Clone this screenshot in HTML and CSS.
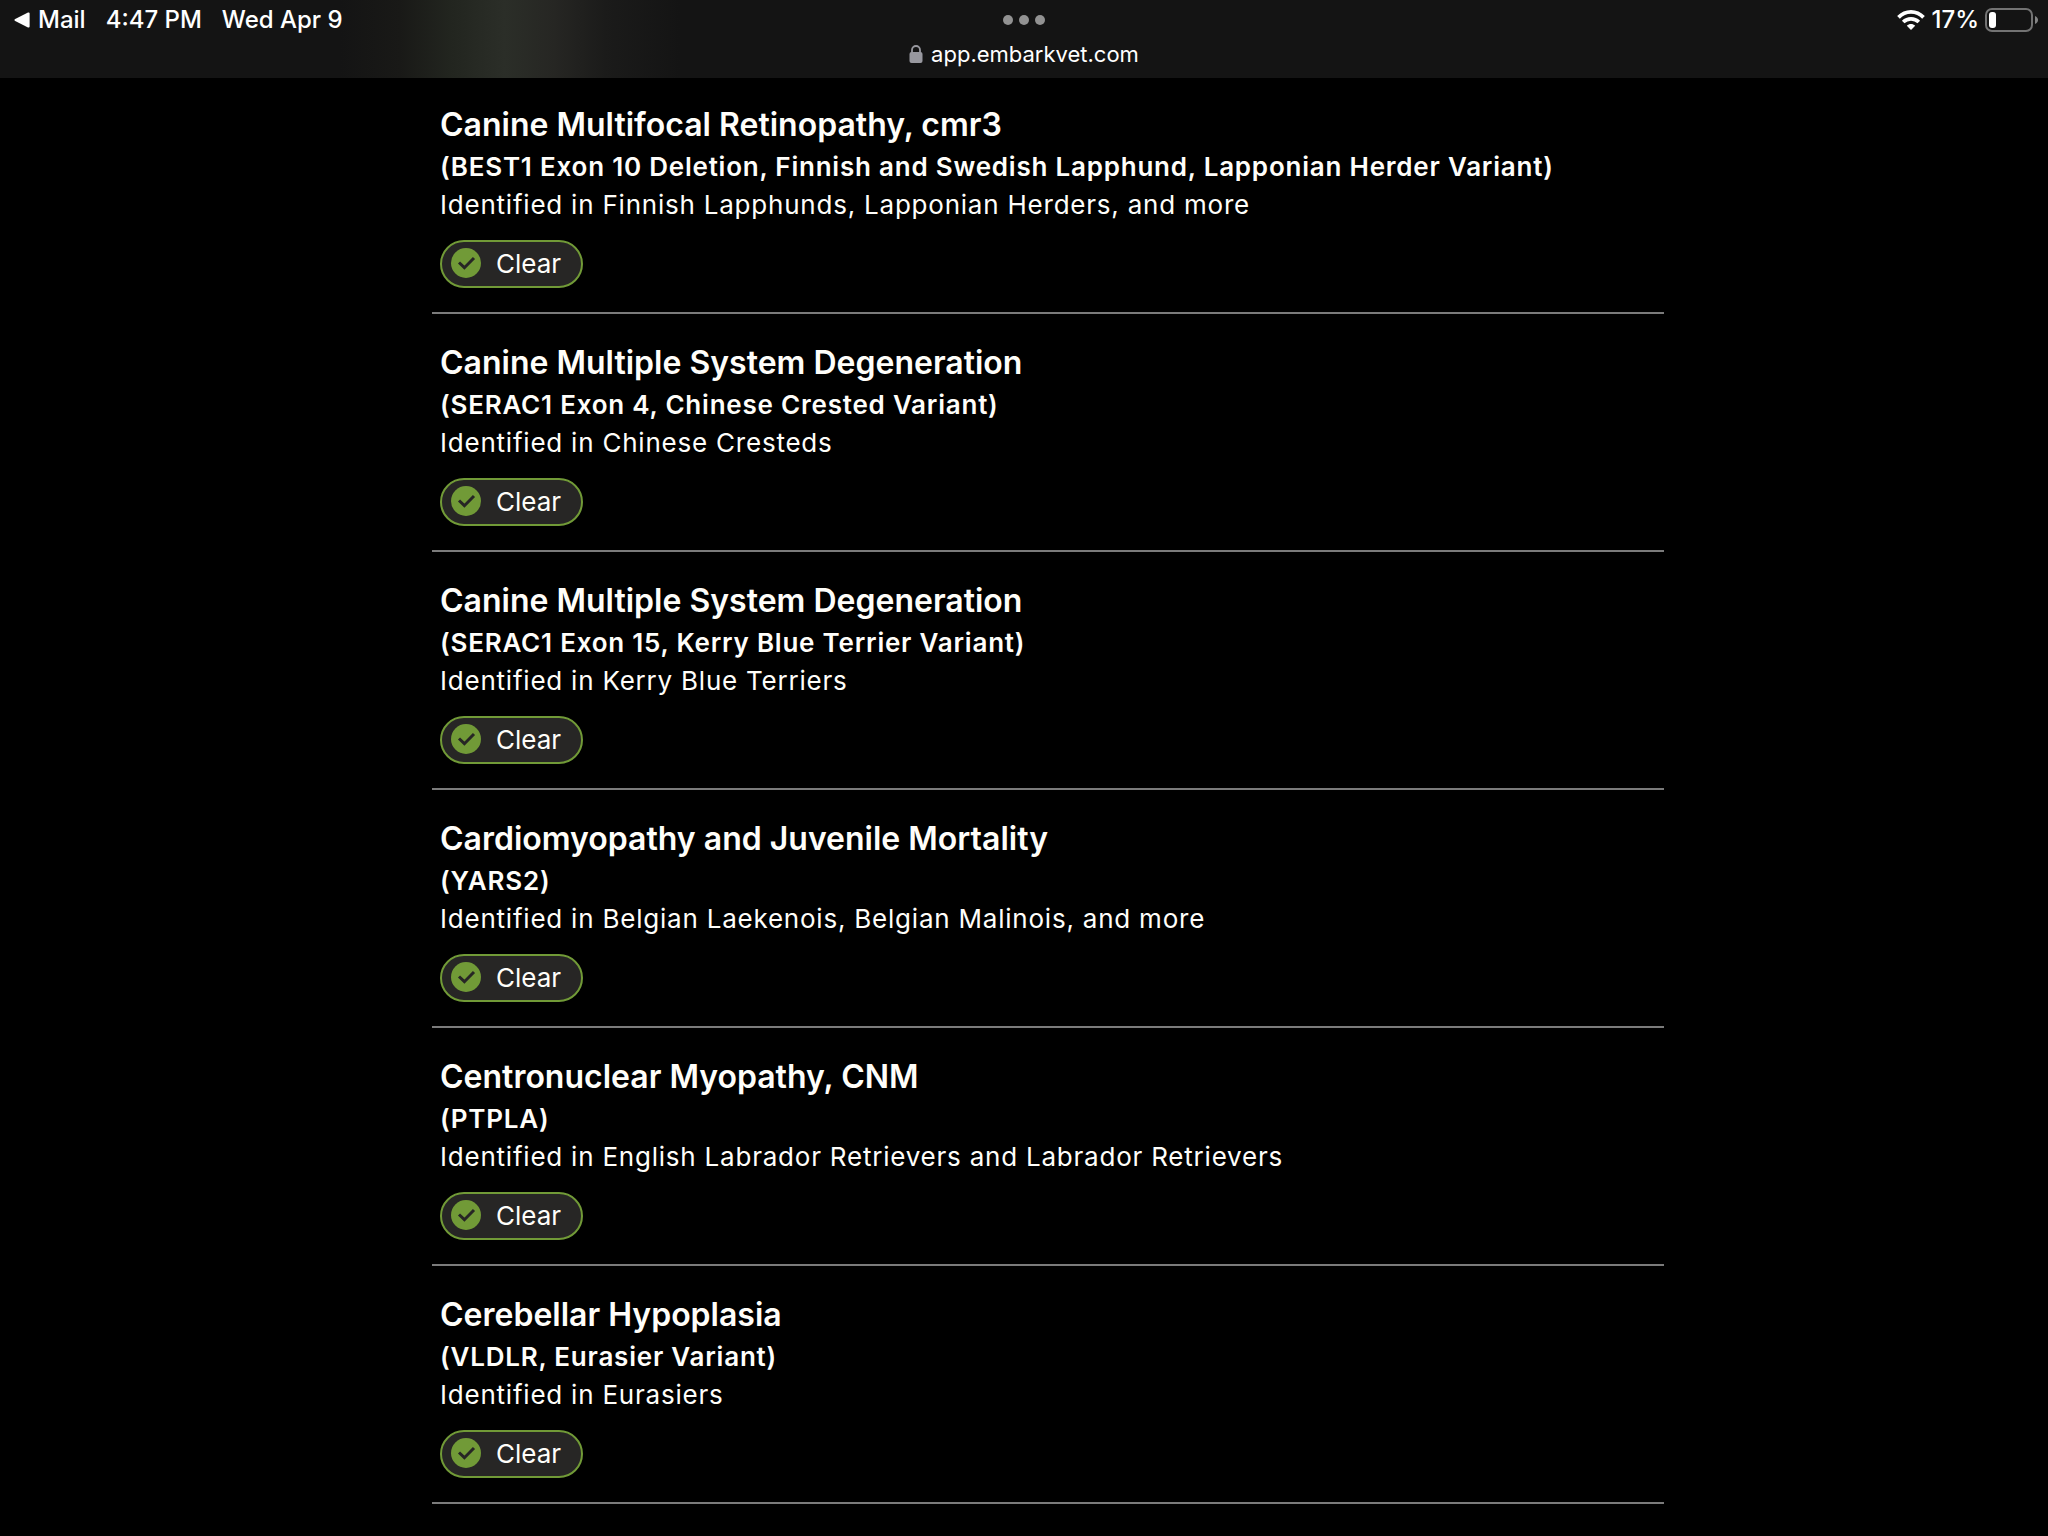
FILE: index.html
```html
<!DOCTYPE html>
<html lang="en">
<head>
<meta charset="utf-8">
<meta name="viewport" content="width=device-width, initial-scale=1">
<title>Health results</title>
<link rel="stylesheet" href="styles.css">
</head>
<body>
<svg class="sprite" aria-hidden="true">
  <symbol id="check" viewBox="0 0 30 30">
    <circle cx="15" cy="15" r="15" fill="#719a37"/>
    <path d="M8 14.5l5.4 5.2L23 10" fill="none" stroke="#272625" stroke-width="3"/>
  </symbol>
</svg>
<header class="browser-bar">
  <div class="status">
    <div class="status-left">
      <a class="back" href="#"><svg width="16" height="16" viewBox="0 0 16 16" aria-hidden="true"><path d="M1.2 7L14 .6Q15.600 0 15.600 1.600V14.400Q15.600 16 14 15.400L1.200 9Q-.4 8 1.200 7z" fill="#fff"/></svg>Mail</a>
      <span>4:47 PM</span>
      <span>Wed Apr 9</span>
    </div>
    <button class="dots" aria-label="Multitasking"><i></i><i></i><i></i></button>
    <div class="status-right">
      <svg width="28" height="20" viewBox="0 0 28 20" aria-hidden="true"><g fill="none" stroke="#fff" stroke-width="3.700"><path d="M1.500 7.400C8.500 .1 19.500 .1 26.500 7.400"/><path d="M6.200 12C10.600 7.700 17.400 7.700 21.800 12"/></g><path d="M14 20l-4.200-4.200c2.500-2.300 5.900-2.300 8.400 0z" fill="#fff"/></svg>
      <span>17%</span>
      <svg width="53" height="24" viewBox="0 0 53 24" aria-hidden="true"><rect x="1" y="1" width="46" height="22" rx="6" fill="none" stroke="#737373" stroke-width="2"/><rect x="4" y="4" width="7" height="16" rx="3" fill="#fff"/><path d="M50 8c4 1.500 4 6.500 0 8z" fill="#858585"/></svg>
    </div>
  </div>
  <div class="address">
    <svg width="14" height="18" viewBox="0 0 14 18" aria-hidden="true"><path d="M3 8V5a4 4 0 0 1 8 0v3" fill="none" stroke="#98989f" stroke-width="1.800"/><rect x=".5" y="7" width="13" height="11" rx="2" fill="#98989f"/></svg>
    <span>app.embarkvet.com</span>
  </div>
</header>
<main class="results">
  <article class="result">
    <h2>Canine Multifocal Retinopathy, cmr3</h2>
    <h3>(BEST1 Exon 10 Deletion, Finnish and Swedish Lapphund, Lapponian Herder Variant)</h3>
    <p>Identified in Finnish Lapphunds, Lapponian Herders, and more</p>
    <div class="pill"><svg><use href="#check"/></svg>Clear</div>
  </article>
  <article class="result">
    <h2>Canine Multiple System Degeneration</h2>
    <h3>(SERAC1 Exon 4, Chinese Crested Variant)</h3>
    <p>Identified in Chinese Cresteds</p>
    <div class="pill"><svg><use href="#check"/></svg>Clear</div>
  </article>
  <article class="result">
    <h2>Canine Multiple System Degeneration</h2>
    <h3>(SERAC1 Exon 15, Kerry Blue Terrier Variant)</h3>
    <p>Identified in Kerry Blue Terriers</p>
    <div class="pill"><svg><use href="#check"/></svg>Clear</div>
  </article>
  <article class="result">
    <h2>Cardiomyopathy and Juvenile Mortality</h2>
    <h3>(YARS2)</h3>
    <p>Identified in Belgian Laekenois, Belgian Malinois, and more</p>
    <div class="pill"><svg><use href="#check"/></svg>Clear</div>
  </article>
  <article class="result">
    <h2>Centronuclear Myopathy, CNM</h2>
    <h3>(PTPLA)</h3>
    <p>Identified in English Labrador Retrievers and Labrador Retrievers</p>
    <div class="pill"><svg><use href="#check"/></svg>Clear</div>
  </article>
  <article class="result">
    <h2>Cerebellar Hypoplasia</h2>
    <h3>(VLDLR, Eurasier Variant)</h3>
    <p>Identified in Eurasiers</p>
    <div class="pill"><svg><use href="#check"/></svg>Clear</div>
  </article>
</main>
</body>
</html>
```
FILE: styles.css
```css
* {
  box-sizing: border-box;
}

body {
  margin: 0;
  min-height: 100vh;
  background: #000;
  color: #fffefa;
  font-family: Inter, "Liberation Sans", sans-serif;
}

.sprite {
  display: none;
}

.browser-bar {
  height: 78px;
  padding: 4px 10px 0;
  background: linear-gradient(90deg, #141414 340px, #191917 400px, #22251f 450px, #2b2e28 505px, #262623 555px, #1b1b1a 605px, #141414 680px);
  color: #fff;
}

.status {
  display: grid;
  grid-template-columns: 1fr auto 1fr;
  align-items: center;
  height: 32px;
  font-size: 24px;
  font-weight: 500;
  line-height: 28px;
}

.status-left,
.status-right {
  display: flex;
  align-items: center;
}

.status-left {
  gap: 20px;
  padding-left: 4px;
}

.back {
  display: flex;
  align-items: center;
  gap: 8px;
  color: inherit;
  text-decoration: none;
}

.status-right {
  justify-content: flex-end;
  gap: 6px;
}

.dots {
  display: flex;
  gap: 6px;
  padding: 0;
  border: 0;
  background: none;
}

.dots i {
  width: 10px;
  height: 10px;
  border-radius: 50%;
  background: #929292;
}

.address {
  display: flex;
  justify-content: center;
  align-items: center;
  gap: 8px;
  height: 36px;
  font-size: 22px;
}

.results {
  padding: 0 384px 0 432px;
}

.result {
  padding: 26px 8px 24px;
  border-bottom: 2px solid #7b7b7b;
}

.result:first-child {
  padding-top: 24px;
}

.result h2,
.result h3,
.result p {
  margin: 0;
}

.result h2 {
  font-size: 32px;
  font-weight: 600;
  line-height: 46px;
}

.result h3,
.result p {
  font-size: 26px;
  line-height: 38px;
  letter-spacing: 0.03em;
}

.result h3 {
  font-weight: 600;
}

.result p {
  font-weight: 400;
}

.pill {
  display: flex;
  align-items: center;
  gap: 15px;
  width: fit-content;
  height: 48px;
  margin-top: 16px;
  padding: 0 20px 2px 9px;
  border: 2px solid #719a37;
  border-radius: 24px;
  background: #272625;
  font-size: 26px;
}

.pill svg {
  width: 30px;
  height: 30px;
}
```
